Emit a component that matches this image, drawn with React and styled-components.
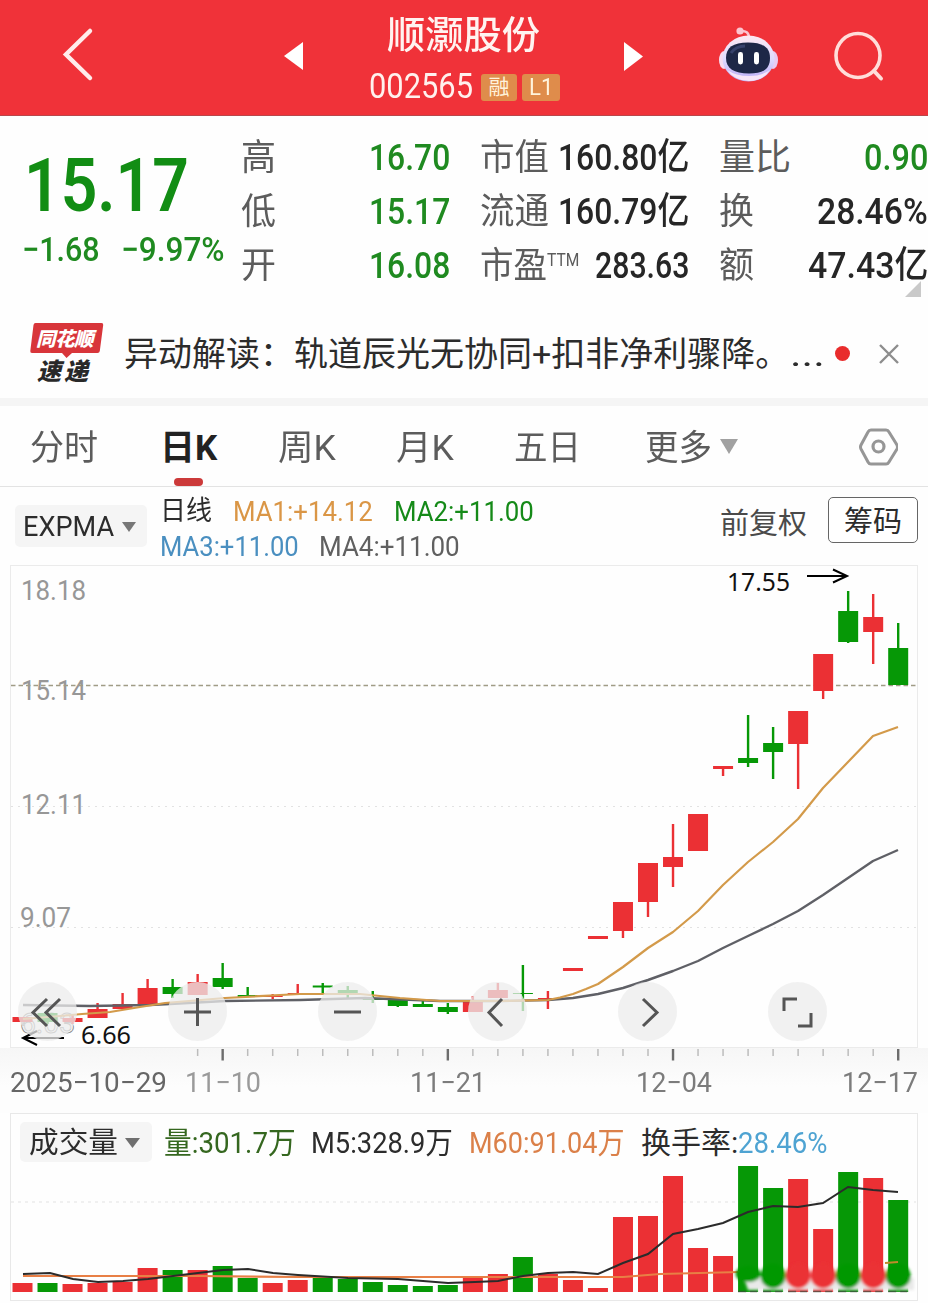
import React, { useLayoutEffect, useRef, useState } from 'react';
import styled, { createGlobalStyle } from 'styled-components';

const RED = '#eb3034';
const GREEN = '#069806';
const HAN = "'Roboto', 'Noto Sans CJK SC', sans-serif";

const Global = createGlobalStyle`
  body { margin: 0; background: #fefefe; }
  * { box-sizing: border-box; }
`;

/* ---------- text that fills a given width ---------- */
const FitBox = styled.span`
  display: block;
  flex: none;
  width: ${(p) => p.$w}px;
  margin-left: ${(p) => p.$ml || 0}px;
  height: ${(p) => p.$lh || p.$size * 1.2}px;
  line-height: ${(p) => p.$lh || p.$size * 1.2}px;
  font-family: ${HAN};
  font-size: ${(p) => p.$size}px;
  font-weight: ${(p) => p.$weight || 400};
  color: ${(p) => p.$color || '#2c2c2c'};
  white-space: nowrap;
`;
const FitInner = styled.span`
  display: inline-block;
  height: 100%;
  line-height: inherit;
  vertical-align: top;
  transform-origin: 0 50%;
`;
function Fit({ w, ml, size, lh, weight, color, children }) {
  const ref = useRef(null);
  const [scale, setScale] = useState(1);
  useLayoutEffect(() => {
    const natural = ref.current.offsetWidth;
    if (natural) setScale(w / natural);
  }, [w, size, children]);
  return (
    <FitBox $w={w} $ml={ml} $size={size} $lh={lh} $weight={weight} $color={color}>
      <FitInner ref={ref} style={{ transform: `scaleX(${scale})` }}>{children}</FitInner>
    </FitBox>
  );
}

/* ---------- page ---------- */
const Page = styled.div`
  width: 928px;
  height: 1303px;
  overflow: hidden;
  display: flex;
  flex-direction: column;
  background: #fefefe;
`;
const Header = styled.header`
  flex: none;
  height: 116px;
  background: #f03239;
  border-bottom: 1px solid #b9474b;
  display: flex;
  align-items: flex-start;
  svg { display: block; flex: none; }
`;
const TitleBlock = styled.div`
  width: 193px;
  margin-left: 64px;
  padding-top: 10px;
`;
const TitleRow = styled.div`
  padding-left: 18px;
`;
const CodeRow = styled.div`
  display: flex;
  align-items: center;
  margin-top: 4px;
`;
const Badge = styled.span`
  display: flex;
  justify-content: center;
  align-items: center;
  width: ${(p) => p.$w}px;
  height: 27px;
  margin-left: ${(p) => p.$ml}px;
  border-radius: 3px;
  background: #df8c4b;
`;

/* ---------- quote ---------- */
const Quote = styled.section`
  flex: none;
  height: 194px;
  display: flex;
  padding-top: 15px;
  position: relative;
`;
const PriceBlock = styled.div`
  width: 241px;
  padding-top: 10px;
`;
const PriceRow = styled.div`
  padding-left: 24px;
`;
const ChangeRow = styled.div`
  display: flex;
  padding-left: 22px;
  margin-top: 1px;
`;
const StatColumn = styled.div`
  display: flex;
  flex-direction: column;
  width: ${(p) => p.$w}px;
  margin-right: ${(p) => p.$gap}px;
`;
const StatRow = styled.div`
  height: 54px;
  display: flex;
  justify-content: space-between;
  align-items: center;
`;
const LabelGroup = styled.span`
  display: flex;
`;
const Corner = styled.svg`
  position: absolute;
  right: 7px;
  bottom: 13px;
`;

/* ---------- news ---------- */
const News = styled.section`
  flex: none;
  height: 88px;
  display: flex;
  align-items: center;
  padding-left: 29px;
  svg { display: block; flex: none; }
`;
const Logo = styled.div`
  width: 75px;
  height: 62px;
  position: relative;
  margin-top: -3px;
  > svg { position: absolute; left: 0; top: 0; }
`;
const LogoText = styled.span`
  position: absolute;
  left: ${(p) => p.$x}px;
  top: ${(p) => p.$y}px;
  font: italic 900 ${(p) => p.$size}px/26px 'Noto Sans CJK SC', sans-serif;
  letter-spacing: ${(p) => p.$ls}px;
  color: ${(p) => p.$color};
  white-space: nowrap;
`;
const Dot = styled.i`
  width: 15px;
  height: 15px;
  border-radius: 50%;
  background: #e92c2c;
  margin: -2px 29px 0 10px;
`;
const Band = styled.div`
  flex: none;
  height: 8px;
  background: #f5f5f5;
`;

/* ---------- tabs ---------- */
const Tabs = styled.nav`
  flex: none;
  height: 81px;
  border-bottom: 1px solid #e3e3e3;
  display: flex;
  padding-left: 30px;
  svg { display: block; flex: none; }
`;
const Tab = styled.div`
  height: 80px;
  padding-top: 21px;
  margin-right: ${(p) => p.$gap}px;
  display: flex;
  flex-direction: column;
  align-items: center;
`;
const Underline = styled.i`
  width: 29px;
  height: 8px;
  border-radius: 4px;
  background: #cc3a3a;
  margin-top: 7px;
  flex: none;
`;

/* ---------- indicator strip ---------- */
const Strip = styled.section`
  flex: none;
  height: 78px;
  display: flex;
  padding-left: 15px;
`;
const Picker = styled.button`
  flex: none;
  display: flex;
  align-items: center;
  width: 132px;
  height: ${(p) => p.$h}px;
  margin: ${(p) => p.$mt}px 0 0;
  padding: 2px 0 0 8px;
  border: 0;
  border-radius: 5px;
  background: #f5f5f5;
`;
const Averages = styled.div`
  margin: 7px 0 0 13px;
  width: 560px;
`;
const AvgRow = styled.div`
  display: flex;
  height: 35px;
  align-items: center;
`;
const ChipButton = styled.button`
  width: 90px;
  height: 46px;
  margin: 10px 0 0 21px;
  padding: 3px 0 0 15px;
  border: 1.5px solid #666;
  border-radius: 5px;
  background: #fff;
  display: flex;
  align-items: center;
`;
const AdjustBox = styled.div`
  padding-top: 19px;
`;

/* ---------- charts ---------- */
const KArea = styled.section`
  flex: none;
  height: 483px;
  margin: 0 10px 0 10px;
  border: 1px solid #ebebeb;
  position: relative;
  > svg { position: absolute; left: -11px; top: -1px; }
`;
const Controls = styled.div`
  position: absolute;
  left: 7px;
  top: 416px;
  display: flex;
  gap: 91px;
`;
const RoundButton = styled.button`
  width: 59px;
  height: 59px;
  padding: 0;
  border: 0;
  border-radius: 50%;
  background: rgba(236, 236, 236, 0.75);
  svg { display: block; }
`;
const Axis = styled.section`
  flex: none;
  height: 65px;
  background: linear-gradient(#f6f6f6, #fdfdfd 60%);
  > svg { display: block; }
`;
const DateRow = styled.div`
  display: flex;
  padding-left: 10px;
  margin-top: 5px;
`;
const VolArea = styled.section`
  flex: none;
  height: 188px;
  margin: 0 10px 0 10px;
  border: 1px solid #e8e8e8;
  position: relative;
  > svg { position: absolute; left: -11px; top: -1px; }
`;
const VolHead = styled.div`
  display: flex;
  align-items: flex-start;
  padding-left: 9px;
`;
const VolText = styled.div`
  display: flex;
  padding-top: 11px;
`;

/* [up?, body top, body bottom, wick top, wick bottom, volume top] */
const DAYS = [
  [1, 1017, 1022, 1017, 1022, 1283], [0, 1013, 1022, 1011, 1024, 1283], [1, 1018, 1022, 1015, 1024, 1284],
  [1, 1009, 1018, 1003, 1018, 1283], [1, 1004, 1009, 993, 1009, 1282], [1, 988, 1005, 979, 1005, 1268],
  [0, 987, 994, 979, 998, 1270], [1, 982, 995, 974, 995, 1270], [0, 978, 987, 963, 989, 1266],
  [0, 995, 997, 987, 997, 1278], [1, 995, 997, 994, 999, 1283], [1, 993, 995, 984, 995, 1280],
  [0, 985.5, 987.5, 983, 993, 1278], [0, 990, 994, 986, 998, 1279], [0, 998, 1000, 991, 1003, 1282],
  [0, 1000, 1006, 997, 1007, 1285], [0, 1004, 1007, 1001, 1007, 1286], [0, 1007, 1012, 1003, 1014, 1285],
  [1, 1001, 1012, 996, 1012, 1277], [1, 990, 998, 983, 998, 1274], [0, 993, 994, 965, 1011, 1257],
  [1, 998, 1000, 991, 1009, 1274], [1, 968, 971, 968, 971, 1280], [1, 936, 939, 936, 939, 1288],
  [1, 902, 931, 902, 938, 1217], [1, 863, 902, 863, 917, 1216], [1, 857, 867, 824, 887, 1176],
  [1, 814, 851, 814, 851, 1248], [1, 766, 769, 766, 776, 1256], [0, 758, 763, 715, 767, 1166],
  [0, 743, 752, 727, 779, 1188], [1, 711, 744, 711, 789, 1179], [1, 654, 691, 654, 699, 1229],
  [0, 611, 642, 591, 643, 1172], [1, 617, 632, 594, 664, 1178], [0, 648, 685, 623, 685, 1200],
];
const dayX = (i) => 22.5 + 25.02 * i;
const FAST = '23,1019 60,1016 82,1014 110,1012 140,1007 165,1003 225,998 300,994 360,994 400,998 440,1001 500,1001 548,1000 560,997.500 573,994 586,989 598,984 623,967 648,948 673,932 698,911 723,885 748,862 773,842 798,819 823,788 848,762 873,736 898,727';
const SLOW = '23,1005 90,1006 150,1005 170,1004 225,1001 300,1000 365,998 440,1001 500,1001 548,1000 573,998 598,994 623,988 648,980 673,971 698,961 723,948 748,936 773,924 798,911 823,895 848,878 873,861 898,850';
const M5 = '23,1274 50,1273 73,1279 98,1282 123,1281 148,1279 173,1276 198,1273 223,1270 248,1269 273,1273 298,1275 348,1278 398,1279 448,1283 475,1282 498,1281 523,1276 548,1273 573,1272 598,1274 623,1263 648,1254 673,1234 698,1229 723,1223 748,1212 773,1206 798,1207 823,1203 848,1187 873,1190 898,1192';
const M60 = '23,1276 200,1276 300,1277 623,1277 660,1274 740,1272';
const M60_END = '885,1263 898,1262';

function Caret({ w, h, color, ml, mt = 0 }) {
  return (
    <svg width={w + ml} height={h + mt} style={{ display: 'block', flex: 'none' }}>
      <path d={`M${ml} ${mt}h${w}l${-w / 2} ${h}z`} fill={color} />
    </svg>
  );
}

function Robot() {
  return (
    <svg width="62" height="60" viewBox="717 25 62 60">
      <defs>
        <linearGradient id="shell" x1="0" y1="0" x2="0" y2="1">
          <stop offset="0" stopColor="#fde9f2" />
          <stop offset="0.5" stopColor="#dfdcff" />
          <stop offset="1" stopColor="#b9a9f4" />
        </linearGradient>
      </defs>
      <path d="M740 31q9-1 9 7" fill="none" stroke="#fbc3cf" strokeWidth="2.5" />
      <circle cx="740" cy="31" r="3.6" fill="#fcc5d0" />
      <ellipse cx="724" cy="60" rx="5" ry="9" fill="#f6dcf0" />
      <ellipse cx="773" cy="60" rx="5" ry="9" fill="#e9ccf2" />
      <ellipse cx="748.500" cy="58.500" rx="26" ry="23" fill="url(#shell)" />
      <path d="M727 70q8 11 22 11t21-11q-8 6-21 6t-22-6z" fill="#f8e6f8" />
      <path d="M748 42.500c15 0 22 5 22 15.500s-6 15.500-21 15.500-23-5-23-15.500 7-15.500 22-15.500z" fill="#1d2747" />
      <path d="M731 53q5-7 14-7" fill="none" stroke="#37426c" strokeWidth="3" />
      <rect x="738" y="52" width="5" height="12.500" rx="2.400" fill="#fff" />
      <rect x="754" y="52" width="5" height="12.500" rx="2.400" fill="#fff" />
    </svg>
  );
}

function KChart() {
  return (
    <svg width="928" height="500" viewBox="0 565 928 500">
      <g strokeDasharray="2 5" stroke="#e2e2e2">
        <path d="M11 806.500H916M11 927.500H916" />
      </g>
      <g fontFamily="Roboto, sans-serif" fontSize="28" fill="#979797">
        <text x="21" y="600" textLength="65" lengthAdjust="spacingAndGlyphs">18.18</text>
        <text x="21" y="700" textLength="65" lengthAdjust="spacingAndGlyphs">15.14</text>
        <text x="21" y="814" textLength="65" lengthAdjust="spacingAndGlyphs">12.11</text>
        <text x="20" y="927" textLength="51" lengthAdjust="spacingAndGlyphs">9.07</text>
        <text x="20" y="1033" textLength="55" lengthAdjust="spacingAndGlyphs" fill="#fff" stroke="#8d8d8d" strokeWidth="1">6.03</text>
      </g>
      <path d="M11 685.500H916" stroke="#a09c86" strokeWidth="1.500" strokeDasharray="4.500 3" />
      {DAYS.map(([up, top, bottom, high, low], i) => (
        <g key={i} fill={up ? RED : GREEN}>
          <rect x={dayX(i) - 1.2} y={high} width="2.400" height={low - high} />
          <rect x={dayX(i) - 10} y={top} width="20" height={bottom - top} />
        </g>
      ))}
      <polyline points={SLOW} fill="none" stroke="#5f6066" strokeWidth="2.400" strokeLinejoin="round" />
      <polyline points={FAST} fill="none" stroke="#d39a4a" strokeWidth="2.200" strokeLinejoin="round" />
      <g fontFamily="Noto Sans, sans-serif" fontSize="25" fill="#111">
        <text x="727" y="591" textLength="63" lengthAdjust="spacingAndGlyphs">17.55</text>
        <text x="81" y="1044" textLength="50" lengthAdjust="spacingAndGlyphs">6.66</text>
      </g>
      <g fill="none" stroke="#000" strokeWidth="2">
        <path d="M807 576H847M833 569.500l14 6.500-14 6.500" />
        <path d="M64 1038H23M37 1031l-14 7 14 7" />
      </g>
    </svg>
  );
}

function AxisTicks() {
  return (
    <svg width="928" height="16" viewBox="0 1048 928 16">
      {DAYS.map((_, i) => {
        if (i < 7) return null;
        const major = i % 9 === 8;
        return <path key={i} d={`M${dayX(i)} 1049v${major ? 11.5 : 7}`} stroke={major ? '#6c6c6c' : '#bcbcbc'} strokeWidth={major ? 2.4 : 1.5} />;
      })}
    </svg>
  );
}

function VolumeChart() {
  return (
    <svg width="928" height="188" viewBox="0 1113 928 188">
      <defs>
        <filter id="soft" x="-20%" y="-50%" width="140%" height="200%"><feGaussianBlur stdDeviation="1.800" /></filter>
      </defs>
      <path d="M11 1202H916" stroke="#e2e2e2" strokeDasharray="3 4" />
      {DAYS.map(([up, , , , , top], i) => (
        <rect key={i} x={dayX(i) - 10} y={top} width="20" height={1292 - top} fill={up ? RED : GREEN} />
      ))}
      <polyline points={M60} fill="none" stroke="#e87f45" strokeWidth="2.200" />
      <polyline points={M5} fill="none" stroke="#2b2b2b" strokeWidth="2" />
      <g filter="url(#soft)">
        <path d="M744 1278H914V1290H748z" fill="#e9e9e9" />
        {DAYS.map(([up], i) => (i < 29 ? null : (
          <ellipse key={i} cx={dayX(i)} cy={i === 29 ? 1274 : 1276} rx="12.500" ry={i === 29 ? 8 : 12.5} fill={up ? RED : GREEN} />
        )))}
      </g>
      <polyline points={M60_END} fill="none" stroke="#c08a2a" strokeWidth="2" />
      {DAYS.map((_, i) => (i < 29 ? null : (
        <path key={i} d={`M${dayX(i) - 10} 1291.500h8M${dayX(i) + 2} 1291.500h7`} stroke="#3d4a3d" strokeWidth="1.500" opacity="0.7" />
      )))}
    </svg>
  );
}

const ICONS = [
  'M29 17L15 30.500 29 44M42 17L28 30.500 42 44',
  'M16 30H43M29.500 16V44',
  'M16 30H43',
  'M34 17L21 30.500 34 44',
  'M25 17L39 30.500 25 44',
  'M16 29V17H29M43 31V44H30',
];

const LABEL = '#5c5c5c';
const VALUE = '#262626';

function Stat({ label, lw, sup, value, vw, color = VALUE }) {
  return (
    <StatRow>
      <LabelGroup>
        <Fit w={lw} size={36} lh={54} color={LABEL}>{label}</Fit>
        {sup && <Fit w={32} size={18} lh={42} color={LABEL}>{sup}</Fit>}
      </LabelGroup>
      <Fit w={vw} size={37} lh={54} weight={500} color={color}>{value}</Fit>
    </StatRow>
  );
}

export default function App() {
  return (
    <>
      <Global />
      <Page>
        <Header>
          <svg width="305" height="115" viewBox="0 0 305 115">
            <path d="M90 31L66 54.500 90 78" fill="none" stroke="#ffeceb" strokeWidth="4.500" strokeLinecap="round" />
            <path d="M284 56l19-14v28z" fill="#fff" />
          </svg>
          <TitleBlock>
            <TitleRow><Fit w={153} size={38} lh={51} weight={500} color="#fff3f0">顺灏股份</Fit></TitleRow>
            <CodeRow>
              <Fit w={104} size={35} lh={44} color="#fff1ee">002565</Fit>
              <Badge $w={36} $ml={8}><Fit w={21} size={21} lh={26} color="#fff3dc">融</Fit></Badge>
              <Badge $w={38} $ml={5}><Fit w={24} size={24} lh={26} color="#fff3dc">L1</Fit></Badge>
            </CodeRow>
          </TitleBlock>
          <svg width="366" height="115" viewBox="562 0 366 115">
            <path d="M624 42v29l19-14.500z" fill="#fff" />
            <svg x="717" y="25" width="62" height="60"><Robot /></svg>
            <circle cx="858" cy="55.500" r="22" fill="none" stroke="#ffdeda" strokeWidth="3.600" />
            <path d="M874 71l7 7.500" stroke="#ffdeda" strokeWidth="4" strokeLinecap="round" />
          </svg>
        </Header>

        <Quote>
          <PriceBlock>
            <PriceRow><Fit w={165} size={73.5} lh={91} weight={600} color="#128d14">15.17</Fit></PriceRow>
            <ChangeRow>
              <Fit w={78} size={34} lh={32} weight={500} color="#1f8a20">−1.68</Fit>
              <Fit w={104} ml={21} size={34} lh={32} weight={500} color="#1f8a20">−9.97%</Fit>
            </ChangeRow>
          </PriceBlock>
          <StatColumn $w={209} $gap={30}>
            <Stat label="高" lw={35} value="16.70" vw={81} color="#1f8a20" />
            <Stat label="低" lw={35} value="15.17" vw={81} color="#1f8a20" />
            <Stat label="开" lw={35} value="16.08" vw={81} color="#1f8a20" />
          </StatColumn>
          <StatColumn $w={209} $gap={30}>
            <Stat label="市值" lw={69} value="160.80亿" vw={131} />
            <Stat label="流通" lw={69} value="160.79亿" vw={131} />
            <Stat label="市盈" lw={67} sup="TTM" value="283.63" vw={94} />
          </StatColumn>
          <StatColumn $w={209} $gap={0}>
            <Stat label="量比" lw={72} value="0.90" vw={64} color="#1f8a20" />
            <Stat label="换" lw={35} value="28.46%" vw={111} />
            <Stat label="额" lw={35} value="47.43亿" vw={120} />
          </StatColumn>
          <Corner width="16" height="16"><path d="M16 0V16H0z" fill="#c9c9c9" /></Corner>
        </Quote>

        <News>
          <Logo>
            <svg width="75" height="62" viewBox="29 322 75 62">
              <path d="M35.500 323H101.500q2 0 1.700 2l-3.400 26q-.3 2-2.300 2H72l-5.500 5-4.500-5H32q-2 0-1.700-2l3.200-26q.3-2 2-2z" fill="#d8353a" />
            </svg>
            <LogoText $x={7} $y={3} $size={19.5} $ls={-0.5} $color="#fff">同花顺</LogoText>
            <LogoText $x={8} $y={35} $size={24} $ls={3} $color="#292929">速递</LogoText>
          </Logo>
          <Fit w={170} ml={20} size={34} lh={50}>异动解读：</Fit>
          <Fit w={495} size={34} lh={50}>轨道辰光无协同+扣非净利骤降。</Fit>
          <Fit w={35} ml={1} size={34} lh={50}>...</Fit>
          <Dot />
          <svg width="20" height="20"><path d="M1 1L19 19M19 1L1 19" stroke="#8d8d8d" strokeWidth="2.400" /></svg>
        </News>
        <Band />

        <Tabs>
          <Tab $gap={62}><Fit w={68} size={35} lh={44} color={LABEL}>分时</Fit></Tab>
          <Tab $gap={61}><Fit w={57} size={35} lh={44} weight={700} color="#222">日K</Fit><Underline /></Tab>
          <Tab $gap={60}><Fit w={58} size={35} lh={44} color={LABEL}>周K</Fit></Tab>
          <Tab $gap={60}><Fit w={58} size={35} lh={44} color={LABEL}>月K</Fit></Tab>
          <Tab $gap={64}><Fit w={67} size={35} lh={44} color={LABEL}>五日</Fit></Tab>
          <Tab $gap={0}><Fit w={67} size={35} lh={44} color={LABEL}>更多</Fit></Tab>
          <Caret w={18} h={15} ml={8} mt={33} color="#a1a1a1" />
          <svg width="160" height="80" viewBox="738 406 160 80">
            <path d="M871 430h15q2 0 3 2l8 13q1 2 0 4l-8 13q-1 2-3 2h-15q-2 0-3-2l-7-13q-1-2 0-4l7-13q1-2 3-2z" fill="none" stroke="#969696" strokeWidth="3" />
            <circle cx="878.500" cy="446.500" r="5.500" fill="none" stroke="#969696" strokeWidth="3.200" />
          </svg>
        </Tabs>

        <Strip>
          <Picker $h={42} $mt={18}>
            <Fit w={91} size={28} lh={42}>EXPMA</Fit>
            <Caret w={14} h={10} ml={8} color="#777" />
          </Picker>
          <Averages>
            <AvgRow>
              <Fit w={52} size={27} lh={35}>日线</Fit>
              <Fit w={140} ml={21} size={28} lh={35} color="#da9646">MA1:+14.12</Fit>
              <Fit w={140} ml={21} size={28} lh={35} color="#158a18">MA2:+11.00</Fit>
            </AvgRow>
            <AvgRow>
              <Fit w={139} size={28} lh={33} color="#4a8fc0">MA3:+11.00</Fit>
              <Fit w={141} ml={20} size={28} lh={33} color="#606060">MA4:+11.00</Fit>
            </AvgRow>
          </Averages>
          <AdjustBox><Fit w={87} size={29} lh={36} color="#4a4a4a">前复权</Fit></AdjustBox>
          <ChipButton><Fit w={58} size={29} lh={42}>筹码</Fit></ChipButton>
        </Strip>

        <KArea>
          <KChart />
          <Controls>
            {ICONS.map((d) => (
              <RoundButton key={d}>
                <svg width="59" height="59"><path d={d} fill="none" stroke="#555" strokeWidth="3" /></svg>
              </RoundButton>
            ))}
          </Controls>
        </KArea>

        <Axis>
          <AxisTicks />
          <DateRow>
            <Fit w={157} size={28} lh={28} color="#666">2025−10−29</Fit>
            <Fit w={76} ml={18} size={28} lh={28} color="#9a9a9a">11−10</Fit>
            <Fit w={76} ml={149} size={28} lh={28} color="#7c7c7c">11−21</Fit>
            <Fit w={76} ml={150} size={28} lh={28} color="#7c7c7c">12−04</Fit>
            <Fit w={76} ml={130} size={28} lh={28} color="#7c7c7c">12−17</Fit>
          </DateRow>
        </Axis>

        <VolArea>
          <VolumeChart />
          <VolHead>
            <Picker $h={40} $mt={8}>
              <Fit w={89} size={29} lh={40}>成交量</Fit>
              <Caret w={15} h={10} ml={8} color="#6f6f6f" />
            </Picker>
            <VolText>
              <Fit w={132} ml={12} size={30} lh={36} color="#35671f">量:301.7万</Fit>
              <Fit w={142} ml={15} size={30} lh={36}>M5:328.9万</Fit>
              <Fit w={156} ml={16} size={30} lh={36} color="#db8049">M60:91.04万</Fit>
              <Fit w={97} ml={16} size={30} lh={36}>换手率:</Fit>
              <Fit w={89} size={30} lh={36} color="#4ea3d2">28.46%</Fit>
            </VolText>
          </VolHead>
        </VolArea>
      </Page>
    </>
  );
}
